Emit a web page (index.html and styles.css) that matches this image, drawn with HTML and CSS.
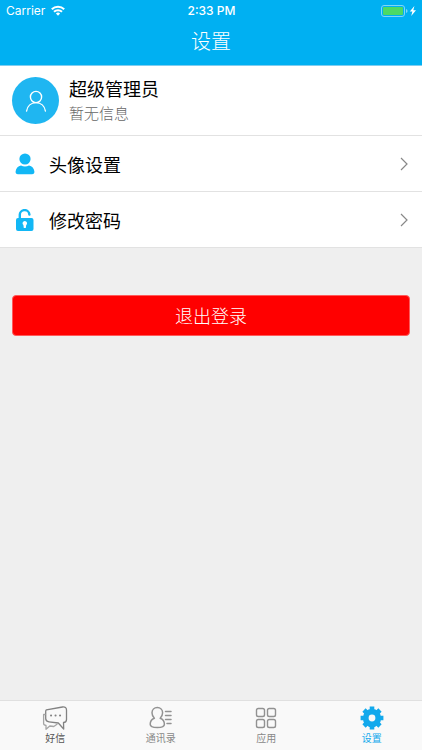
FILE: index.html
```html
<!DOCTYPE html>
<html lang="zh-CN">
<head>
  <meta charset="UTF-8">
  <meta name="viewport" content="width=device-width, initial-scale=1.0">
  <title>设置</title>
  <link rel="stylesheet" href="styles.css">
</head>
<body>
  <header class="header">
    <div class="status-bar">
      <div class="status-left">
        <span>Carrier</span>
        <svg width="14" height="11" viewBox="0 0 14 11">
          <g fill="none" stroke="#fff" stroke-width="2">
            <path d="M0.8 4.2a8.8 8.8 0 0 1 12.4 0"/>
            <path d="M3 6.8a5.7 5.7 0 0 1 8 0"/>
          </g>
          <path fill="#fff" d="M7 10.8L4.9 8.6a3 3 0 0 1 4.2 0z"/>
        </svg>
      </div>
      <span class="status-time">2:33 PM</span>
      <div class="status-right">
        <svg width="36" height="12" viewBox="0 0 36 12">
          <rect x="0.5" y="0.5" width="23" height="11" rx="2.5" fill="none" stroke="#7fd6f8"/>
          <rect x="2" y="2" width="20" height="8" rx="1" fill="#4cd964"/>
          <path d="M25 4q1.6.5 1.6 2T25 8z" fill="#7fd6f8"/>
          <path d="M33.4 1l-4.600 5.600h2.600L30.200 11l4.800-5.800h-2.700z" fill="#fff"/>
        </svg>
      </div>
    </div>
    <h1>设置</h1>
  </header>

  <main class="content">
    <section class="profile">
      <div class="avatar">
        <svg width="22" height="22" viewBox="0 0 22 22" fill="none" stroke="#fff" stroke-width="1.4" stroke-linecap="round">
          <circle cx="11" cy="7" r="5.6"/>
          <path d="M1.6 21c.8-5 4.5-8.4 9.4-8.4s8.6 3.4 9.4 8.4"/>
        </svg>
      </div>
      <div>
        <h2>超级管理员</h2>
        <p>暂无信息</p>
      </div>
    </section>

    <nav class="menu">
      <a href="#" class="menu-item">
        <svg class="menu-icon" viewBox="0 0 20 22" fill="#12b7f5">
          <circle cx="10" cy="6" r="5.6"/>
          <path d="M.6 18.5C.8 15.4 3 13 6 12.4c2.4 1.5 5.6 1.5 8 0 3 .6 5.200 3 5.400 6.100.1 2-.6 2.700-2.400 2.700H3c-1.800 0-2.500-.7-2.400-2.700z"/>
        </svg>
        <span>头像设置</span>
        <svg class="chevron" viewBox="0 0 8 14"><path d="M1 1l6 6-6 6"/></svg>
      </a>
      <a href="#" class="menu-item">
        <svg class="menu-icon" viewBox="0 0 20 22">
          <path fill="none" stroke="#12b7f5" stroke-width="2.4" stroke-linecap="round" d="M4.8 10V6.200a4.800 4.800 0 0 1 9.600-.6"/>
          <path fill="#12b7f5" fill-rule="evenodd" d="M3 9h13.500a2 2 0 0 1 2 2v9a2 2 0 0 1-2 2H3a2 2 0 0 1-2-2v-9a2 2 0 0 1 2-2zm6.800 3a2.300 2.300 0 0 0-1.400 4.100l.4 3h2l.4-3A2.300 2.300 0 0 0 9.800 12z"/>
        </svg>
        <span>修改密码</span>
        <svg class="chevron" viewBox="0 0 8 14"><path d="M1 1l6 6-6 6"/></svg>
      </a>
    </nav>

    <button type="button" class="logout">退出登录</button>
  </main>

  <nav class="tab-bar">
    <a href="#" class="tab tab-chat">
      <svg viewBox="0 0 26 26" fill="none" stroke="#828282" stroke-width="1.3" stroke-linejoin="round" stroke-linecap="round">
        <path d="M4.4 4.8L20.500 2q4-.4 4 3v9.500q0 3-3 3l.2 6.500-5.400-6-9.300-1.200q-3.300-.5-3.300-3.400V6.600q0-1.500.7-1.800z"/>
        <path stroke="#a5a5a5" d="M3 9.500H1.600v9q0 1.600 2.400 2v3.800L7.800 21l4 .5 3.200-2.200"/>
        <path stroke-width="2" d="M9 10.500h.1M13.500 10.500h.1M18 10.500h.1"/>
      </svg>
      <span>好信</span>
    </a>
    <a href="#" class="tab">
      <svg viewBox="0 0 26 26" fill="none" stroke="#929292" stroke-width="1.5" stroke-linecap="round" stroke-linejoin="round">
        <path d="M6.400 13.200C4.800 11.800 4 9.900 4 7.800 4 4.600 6.300 2.500 9.300 2.500s5.300 2.100 5.300 5.300c0 2.100-.8 4-2.400 5.400 2.800 1 4.200 3.200 4.200 6 0 2.500-2.500 3.300-7.100 3.300s-7.100-.8-7.100-3.300c0-2.800 1.400-5 4.200-6z"/>
        <path d="M17.500 6.500H23M17.500 10.500H23M17.500 14.500H23M19 18.500h4"/>
      </svg>
      <span>通讯录</span>
    </a>
    <a href="#" class="tab">
      <svg viewBox="0 0 26 26" fill="none" stroke="#929292" stroke-width="1.4">
        <rect x="3.500" y="3.500" width="8" height="8" rx="1.800"/>
        <rect x="14.500" y="3.500" width="8" height="8" rx="1.800"/>
        <rect x="3.500" y="14.500" width="8" height="8" rx="1.800"/>
        <rect x="14.500" y="14.500" width="8" height="8" rx="1.800"/>
      </svg>
      <span>应用</span>
    </a>
    <a href="#" class="tab active">
      <svg viewBox="0 0 26 26">
        <circle cx="13" cy="13" r="6.300" fill="none" stroke="#12a9ec" stroke-width="5.800"/>
        <g stroke="#12a9ec" stroke-width="4.600" stroke-linejoin="round">
          <path d="M13 1.600v4M13 20.400v4M1.600 13h4M20.400 13h4M5 5l2.500 2.500M18.500 18.500L21 21M5 21l2.500-2.500M18.500 7.500L21 5"/>
        </g>
      </svg>
      <span>设置</span>
    </a>
  </nav>
</body>
</html>
```
FILE: styles.css
```css
* { margin: 0; padding: 0; box-sizing: border-box; }
body {
  display: flex;
  flex-direction: column;
  min-height: 100vh;
  font-family: "Noto Sans CJK SC", sans-serif;
  background: #efefef;
  color: #000;
}
a {
  color: inherit;
  text-decoration: none;
}
svg {
  display: block;
  flex-shrink: 0;
}

/* header */
.header {
  background: #00b0f2;
  border-bottom: 1px solid #7fcdf0;
  color: #fff;
  text-align: center;
}
.status-bar {
  display: grid;
  grid-template-columns: 1fr auto 1fr;
  align-items: center;
  height: 21px;
  padding: 0 5px 0 6px;
  font-family: Inter, sans-serif;
  font-size: 12px;
}
.status-left {
  display: flex;
  align-items: center;
  gap: 6px;
}
.status-time { font-weight: 500; }
.status-right { justify-self: end; }
h1 {
  font-size: 20px;
  font-weight: 300;
  line-height: 40px;
  padding-bottom: 4px;
}

/* content */
.content { flex: 1; }
.profile {
  display: flex;
  align-items: center;
  gap: 10px;
  height: 70px;
  padding: 0 12px;
  background: #fff;
  border-bottom: 1px solid #e2e2e2;
}
.avatar {
  display: flex;
  align-items: center;
  justify-content: center;
  width: 47px;
  height: 47px;
  border-radius: 50%;
  background: #1fb6f1;
}
.profile h2 {
  font-size: 18px;
  font-weight: 400;
  line-height: 26px;
}
.profile p {
  padding-bottom: 2px;
  font-size: 15px;
  font-weight: 300;
  line-height: 24px;
  color: #666;
}
.menu-item {
  display: flex;
  align-items: center;
  height: 56px;
  padding: 1px 14px 0 15px;
  background: #fff;
  border-bottom: 1px solid #e2e2e2;
  font-size: 18px;
}
.menu-item span {
  flex: 1;
  margin-left: 14px;
}
.menu-icon {
  width: 20px;
  height: 22px;
}
.chevron {
  width: 8px;
  height: 14px;
  fill: none;
  stroke: #888;
  stroke-width: 1.2;
}
.logout {
  display: block;
  width: calc(100% - 24px);
  height: 41px;
  margin: 47px auto 0;
  padding-bottom: 1px;
  border: 1px solid #ff5a5a;
  border-radius: 4px;
  background: #f00;
  color: #fff;
  font-family: inherit;
  font-size: 18px;
  font-weight: 300;
  cursor: pointer;
}

/* tab bar */
.tab-bar {
  display: flex;
  height: 50px;
  background: #f9f9f9;
  border-top: 1px solid #e0e0e0;
}
.tab {
  flex: 1;
  display: flex;
  flex-direction: column;
  align-items: center;
  padding: 4px 0 0 5px;
  font-size: 10px;
  line-height: 14px;
  color: #888;
}
.tab svg {
  width: 26px;
  height: 26px;
}
.tab-chat { color: #555; }
.tab.active { color: #12a9ec; }
```
